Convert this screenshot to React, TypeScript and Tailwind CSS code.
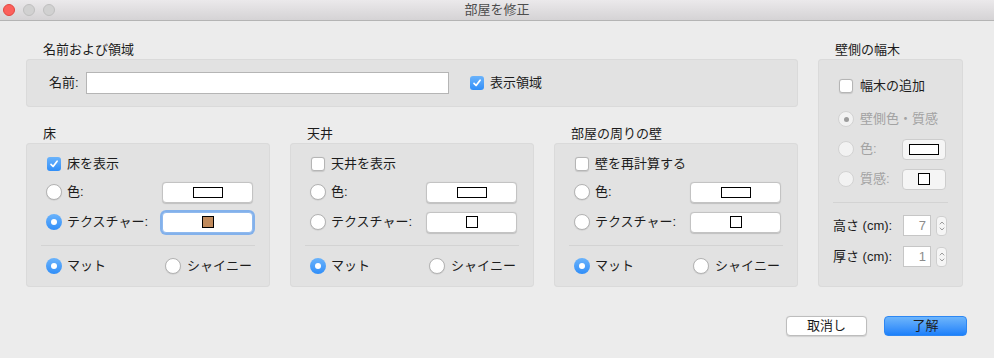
import React from 'react';

const font = "font-['Liberation_Sans','Noto_Sans_CJK_JP',sans-serif]";

function Check({ checked }: { checked?: boolean }) {
  if (checked) {
    return (
      <span className="flex items-center justify-center w-[14px] h-[14px] shrink-0 rounded-[3px] bg-linear-to-b from-[#6ab3fb] to-[#2f8ef8]">
        <svg width="10" height="10" viewBox="0 0 10 10">
          <path d="M2 5.3 L4.1 7.5 L8.1 2.2" stroke="white" strokeWidth="1.7" fill="none" strokeLinecap="round" strokeLinejoin="round" />
        </svg>
      </span>
    );
  }
  return <span className="block w-[14px] h-[14px] shrink-0 rounded-[3px] bg-white border border-[#b5b5b5] shadow-[0_0.5px_1px_rgba(0,0,0,0.12)]" />;
}

function Radio({ checked, disabled }: { checked?: boolean; disabled?: boolean }) {
  if (disabled) {
    return (
      <span className="flex items-center justify-center w-[16px] h-[16px] shrink-0 rounded-full bg-[#f2f2f2] border border-[#d2d2d2]">
        {checked && <span className="w-[5px] h-[5px] rounded-full bg-[#9c9c9c]" />}
      </span>
    );
  }
  if (checked) {
    return (
      <span className="flex items-center justify-center w-[16px] h-[16px] shrink-0 rounded-full bg-linear-to-b from-[#6ab3fb] to-[#2f8ef8]">
        <span className="w-[6px] h-[6px] rounded-full bg-white" />
      </span>
    );
  }
  return <span className="block w-[16px] h-[16px] shrink-0 rounded-full bg-white border border-[#b3b3b3] shadow-[0_0.5px_1px_rgba(0,0,0,0.12)]" />;
}

function Swatch({ square, fill, focus, disabled, wide }: { square?: boolean; fill?: string; focus?: boolean; disabled?: boolean; wide?: boolean }) {
  const base = wide ? 'w-[91px]' : 'w-[44px]';
  const look = focus
    ? 'bg-white border border-[#8fb9ee] shadow-[0_0_0_2px_rgba(91,157,240,0.7)]'
    : disabled
    ? 'bg-[#f5f5f5] border border-[#cdcdcd]'
    : 'bg-white border border-[#c3c3c3] shadow-[0_0.5px_1px_rgba(0,0,0,0.15)]';
  return (
    <div className={`${base} h-[21px] shrink-0 rounded-[4px] flex items-center justify-center ${look}`}>
      {square ? (
        <span className="block w-[12px] h-[12px] border border-black" style={{ backgroundColor: fill ?? '#ffffff' }} />
      ) : (
        <span className="block w-[30px] h-[11px] border border-black bg-white" />
      )}
    </div>
  );
}

function Section({ title, checkLabel, checked, textured }: { title: string; checkLabel: string; checked?: boolean; textured?: boolean }) {
  return (
    <div className="w-[244px]">
      <div className="pt-[19px] pl-[17px] leading-[16px] mb-[1px]">{title}</div>
      <div className="bg-[#e2e2e2] shadow-[inset_0_0_0_1px_#dadada] rounded-[4px] pt-[11px] pb-[11px]">
        <div className="flex items-center h-[20px] pl-[21px] gap-[6px]">
          <Check checked={checked} />
          <span>{checkLabel}</span>
        </div>
        <div className="flex items-center h-[22px] mt-[7px] pl-[20px] pr-[17px] gap-[5px]">
          <Radio />
          <span className="flex-1">色:</span>
          <Swatch wide />
        </div>
        <div className="flex items-center h-[22px] mt-[8px] pl-[20px] pr-[17px] gap-[5px]">
          <Radio checked={textured} />
          <span className="flex-1">テクスチャー:</span>
          <Swatch wide square fill={textured ? '#c08a5c' : undefined} focus={textured} />
        </div>
        <div className="h-px bg-[#d3d3d3] mx-[15px] mt-[12px]" />
        <div className="flex items-center h-[20px] mt-[10px] pl-[20px]">
          <div className="flex items-center gap-[5px] w-[119px]">
            <Radio checked />
            <span>マット</span>
          </div>
          <div className="flex items-center gap-[6px]">
            <Radio />
            <span>シャイニー</span>
          </div>
        </div>
      </div>
    </div>
  );
}

function Stepper() {
  return (
    <div className="w-[11px] h-[20px] rounded-[4px] bg-[#f5f5f5] border border-[#cfcfcf] flex flex-col items-center justify-center gap-[2px]">
      <svg width="6" height="4" viewBox="0 0 6 4"><path d="M0.8 3.3 L3 1 L5.2 3.3" stroke="#9a9a9a" strokeWidth="1" fill="none" /></svg>
      <svg width="6" height="4" viewBox="0 0 6 4"><path d="M0.8 0.7 L3 3 L5.2 0.7" stroke="#9a9a9a" strokeWidth="1" fill="none" /></svg>
    </div>
  );
}

function NumField({ label, value }: { label: string; value: string }) {
  return (
    <div className="flex items-center h-[21px] pl-[15px]">
      <span className="w-[70px]">{label}</span>
      <div className="w-[28px] h-[21px] bg-white border border-[#c6c6c6] text-right pr-[4px] text-[#8c8c8c] leading-[19px]">{value}</div>
      <div className="ml-[5px]">
        <Stepper />
      </div>
    </div>
  );
}

export default function App() {
  return (
    <div className={`w-[994px] h-[358px] bg-[#ececec] text-[13px] text-[#1c1c1c] leading-[16px] ${font}`}>
      <div className="relative h-[21px] bg-linear-to-b from-[#ebe9eb] to-[#d5d3d5] border-b border-[#b4b4b4] flex items-center pl-[3px] gap-[8px]">
        <span className="w-[12px] h-[12px] rounded-full bg-[#fc605c] border border-[#e2463f]" />
        <span className="w-[12px] h-[12px] rounded-full bg-[#d1d1d1] border border-[#bfbfbf]" />
        <span className="w-[12px] h-[12px] rounded-full bg-[#d1d1d1] border border-[#bfbfbf]" />
        <span className="absolute inset-0 flex items-center justify-center text-[#4d4d4d]">部屋を修正</span>
      </div>

      <div className="flex pl-[26px] gap-[20px]">
        <div className="w-[772px]">
          <div className="pt-[21px] pl-[17px] mb-[1px]">名前および領域</div>
          <div className="bg-[#e2e2e2] shadow-[inset_0_0_0_1px_#dadada] rounded-[4px] py-[13px] pl-[23px] flex items-center h-[48px]">
            <span className="w-[37px]">名前:</span>
            <div className="w-[363px] h-[22px] bg-white border border-[#b5b5b5]" />
            <div className="flex items-center gap-[6px] ml-[21px]">
              <Check checked />
              <span>表示領域</span>
            </div>
          </div>
          <div className="flex gap-[20px]">
            <Section title="床" checkLabel="床を表示" checked textured />
            <Section title="天井" checkLabel="天井を表示" />
            <Section title="部屋の周りの壁" checkLabel="壁を再計算する" />
          </div>
        </div>

        <div className="w-[145px]">
          <div className="pt-[21px] pl-[17px] mb-[1px]">壁側の幅木</div>
          <div className="bg-[#e2e2e2] shadow-[inset_0_0_0_1px_#dadada] rounded-[4px] pt-[17px] pb-[20px]">
            <div className="flex items-center h-[20px] pl-[21px] gap-[7px]">
              <Check />
              <span>幅木の追加</span>
            </div>
            <div className="flex items-center h-[20px] mt-[13px] pl-[20px] gap-[6px] text-[#a3a3a3]">
              <Radio checked disabled />
              <span>壁側色・質感</span>
            </div>
            <div className="flex items-center h-[22px] mt-[9px] pl-[20px] pr-[17px] gap-[6px] text-[#a3a3a3]">
              <Radio disabled />
              <span className="flex-1">色:</span>
              <Swatch disabled />
            </div>
            <div className="flex items-center h-[22px] mt-[8px] pl-[20px] pr-[17px] gap-[6px] text-[#a3a3a3]">
              <Radio disabled />
              <span className="flex-1">質感:</span>
              <Swatch disabled square />
            </div>
            <div className="h-px bg-[#d3d3d3] mx-[15px] mt-[12px]" />
            <div className="mt-[12px]">
              <NumField label="高さ (cm):" value="7" />
            </div>
            <div className="mt-[10px]">
              <NumField label="厚さ (cm):" value="1" />
            </div>
          </div>
        </div>
      </div>

      <div className="flex justify-end gap-[17px] pr-[27px] mt-[29px]">
        <button className="w-[81px] h-[20px] rounded-[4px] bg-white border border-[#bdbdbd] shadow-[0_0.5px_1px_rgba(0,0,0,0.12)] leading-[18px]">取消し</button>
        <button className="w-[83px] h-[20px] rounded-[4px] bg-linear-to-b from-[#6db5fb] to-[#1b80fa] border border-[#2d87f3] leading-[18px]">了解</button>
      </div>
    </div>
  );
}
